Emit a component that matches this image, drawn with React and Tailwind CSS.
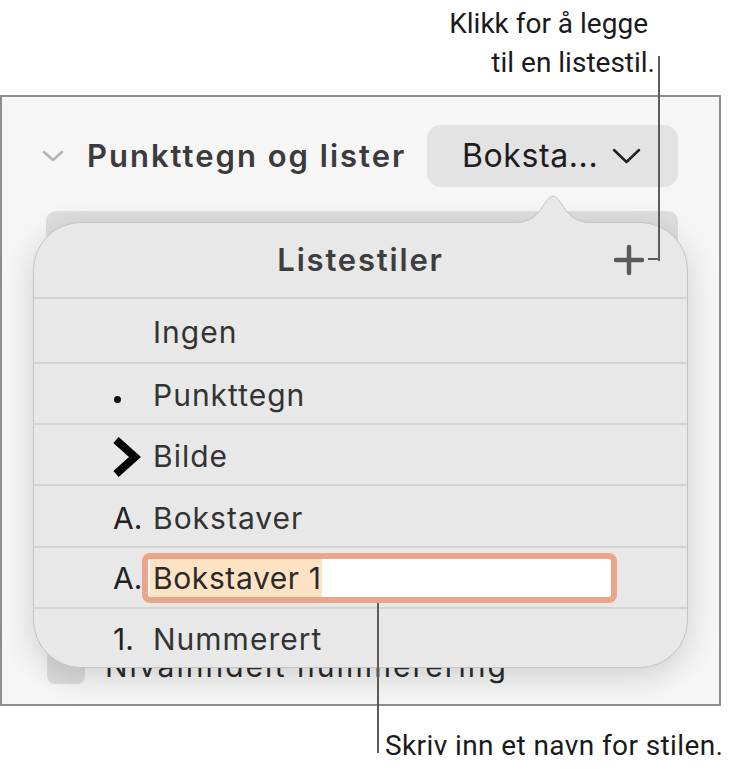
import React from "react";

export default function App() {
  return (
    <div className="relative w-[729px] h-[769px] overflow-hidden bg-white font-['Inter',sans-serif]">
      {/* top annotation */}
      <div className="h-[95px] flex flex-col items-end pr-[74px] pt-[4px] font-['Roboto',sans-serif] text-[28px] leading-[39px] text-[#1a1a1a]">
        <div className="mr-[7px]">Klikk for å legge</div>
        <div>til en listestil.</div>
      </div>

      {/* panel */}
      <div className="relative w-[721px] h-[611px] border-2 border-[#8d8d8d] bg-[#f6f6f6] flex flex-col">
        <div className="mt-[28px] h-[62px] flex items-center">
          <svg className="ml-[40px]" width="22" height="12" viewBox="0 0 22 12">
            <path d="M2 2 L11 10 L20 2" fill="none" stroke="#b3b3b3" strokeWidth="2.5" strokeLinecap="round" strokeLinejoin="round" />
          </svg>
          <div className="ml-[23px] text-[31px] font-semibold text-[#3b3b3b] tracking-[2px]">Punkttegn og lister</div>
          <div className="ml-auto mr-[41px] w-[251px] h-[62px] rounded-[14px] bg-[#e3e3e3] flex items-center pl-[35px]">
            <span className="text-[32px] text-[#1d1d1d] tracking-[0.6px]">Boksta...</span>
            <svg className="ml-auto mr-[37px]" width="29" height="16" viewBox="0 0 29 16">
              <path d="M2 2 L14.5 14 L27 2" fill="none" stroke="#222" strokeWidth="2.5" strokeLinecap="round" strokeLinejoin="round" />
            </svg>
          </div>
        </div>
        <div className="mt-[24px] ml-[44px] w-[632px] h-[44px] rounded-[10px] bg-[#dedede]" />
        <div className="mt-[393px] flex items-center h-[36px]">
          <div className="ml-[45px] w-[38px] h-[36px] rounded-[8px] bg-[#dcdcdc]" />
          <div className="ml-[20px] text-[30px] text-[#2b2b2b] tracking-[2px]">Nivåinndelt nummerering</div>
        </div>
      </div>

      {/* bottom annotation */}
      <div className="mt-[23px] pl-[385px] font-['Roboto',sans-serif] text-[28px] leading-[34px] text-[#1a1a1a] tracking-[0.4px]">
        Skriv inn et navn for stilen.
      </div>

      {/* popover */}
      <div className="absolute left-[33px] top-[222px] w-[655px] h-[446px] z-10 rounded-[48px] border border-[#c4c4c4] bg-[#e8e8e8] shadow-[0_8px_32px_rgba(0,0,0,0.16)] flex flex-col">
        <div className="relative h-[74px] flex items-center justify-center">
          <span className="text-[31px] font-semibold text-[#3e3e3e] tracking-[1.8px]">Listestiler</span>
          <svg className="absolute right-[42px] top-[21px]" width="32" height="32" viewBox="0 0 32 32">
            <path d="M16 3 V29 M3 16 H29" stroke="#595959" strokeWidth="4.5" strokeLinecap="round" />
          </svg>
        </div>
        <div className="h-[65px] flex items-center border-t-2 border-[#d3d3d3] pl-[79px] pt-[4px]">
          <div className="w-[40px]" />
          <span className="text-[30px] text-[#333] tracking-[1px]">Ingen</span>
        </div>
        <div className="h-[61px] flex items-center border-t-2 border-[#d3d3d3] pl-[79px] pt-[4px]">
          <div className="w-[40px] flex">
            <div className="ml-[1px] mt-[8px] w-[7px] h-[7px] rounded-full bg-[#111]" />
          </div>
          <span className="text-[30px] text-[#333] tracking-[1px]">Punkttegn</span>
        </div>
        <div className="h-[61px] flex items-center border-t-2 border-[#d3d3d3] pl-[79px] pt-[4px]">
          <div className="w-[40px] flex">
            <svg width="30" height="42" viewBox="0 0 30 42" className="-ml-[1px]">
              <path d="M4 4 L23 21 L4 38" fill="none" stroke="#000" strokeWidth="8" strokeLinejoin="miter" strokeLinecap="butt" />
            </svg>
          </div>
          <span className="text-[30px] text-[#333] tracking-[1px]">Bilde</span>
        </div>
        <div className="h-[62px] flex items-center border-t-2 border-[#d3d3d3] pl-[79px] pt-[4px]">
          <div className="w-[40px] text-[30px] text-[#222]">A.</div>
          <span className="text-[30px] text-[#333] tracking-[1px]">Bokstaver</span>
        </div>
        <div className="h-[61px] flex items-center border-t-2 border-[#d3d3d3] pl-[79px]">
          <div className="w-[29px] text-[30px] text-[#222] pt-[2px]">A.</div>
          <div className="w-[475px] h-[50px] rounded-[8px] border-[6px] border-[#eba689] bg-white flex items-stretch pl-[2px]">
            <span className="bg-[#fde2c4] pl-[3px] text-[30px] leading-[38px] text-[#2a2a2a] tracking-[0.6px]">Bokstaver 1</span>
          </div>
        </div>
        <div className="flex-1 flex items-center border-t-2 border-[#d3d3d3] pl-[79px] pt-[2px]">
          <div className="w-[40px] text-[30px] text-[#222]">1.</div>
          <span className="text-[30px] text-[#333] tracking-[1px]">Nummerert</span>
        </div>
      </div>

      {/* popover arrow */}
      <svg className="absolute left-[514px] top-[192px] z-20" width="78" height="33" viewBox="0 0 78 33">
        <path d="M0 31 C12 31 20 27 26 19 L33 9 C36 3.5 42 3.5 45 9 L52 19 C58 27 66 31 78 31 L78 33 L0 33 Z" fill="#e8e8e8" />
        <path d="M0 30.5 C12 30.5 20 26.5 26 18.5 L33 8.5 C36 3 42 3 45 8.5 L52 18.5 C58 26.5 66 30.5 78 30.5" fill="none" stroke="#c4c4c4" strokeWidth="1" />
      </svg>

      {/* callout lines */}
      <div className="absolute left-[658px] top-[56px] w-[2px] h-[205px] bg-[#5c5c5c] z-30" />
      <div className="absolute left-[648px] top-[258px] w-[12px] h-[2px] bg-[#5c5c5c] z-30" />
      <div className="absolute left-[377px] top-[603px] w-[2px] h-[150px] bg-[#5c5c5c] z-30" />
    </div>
  );
}
